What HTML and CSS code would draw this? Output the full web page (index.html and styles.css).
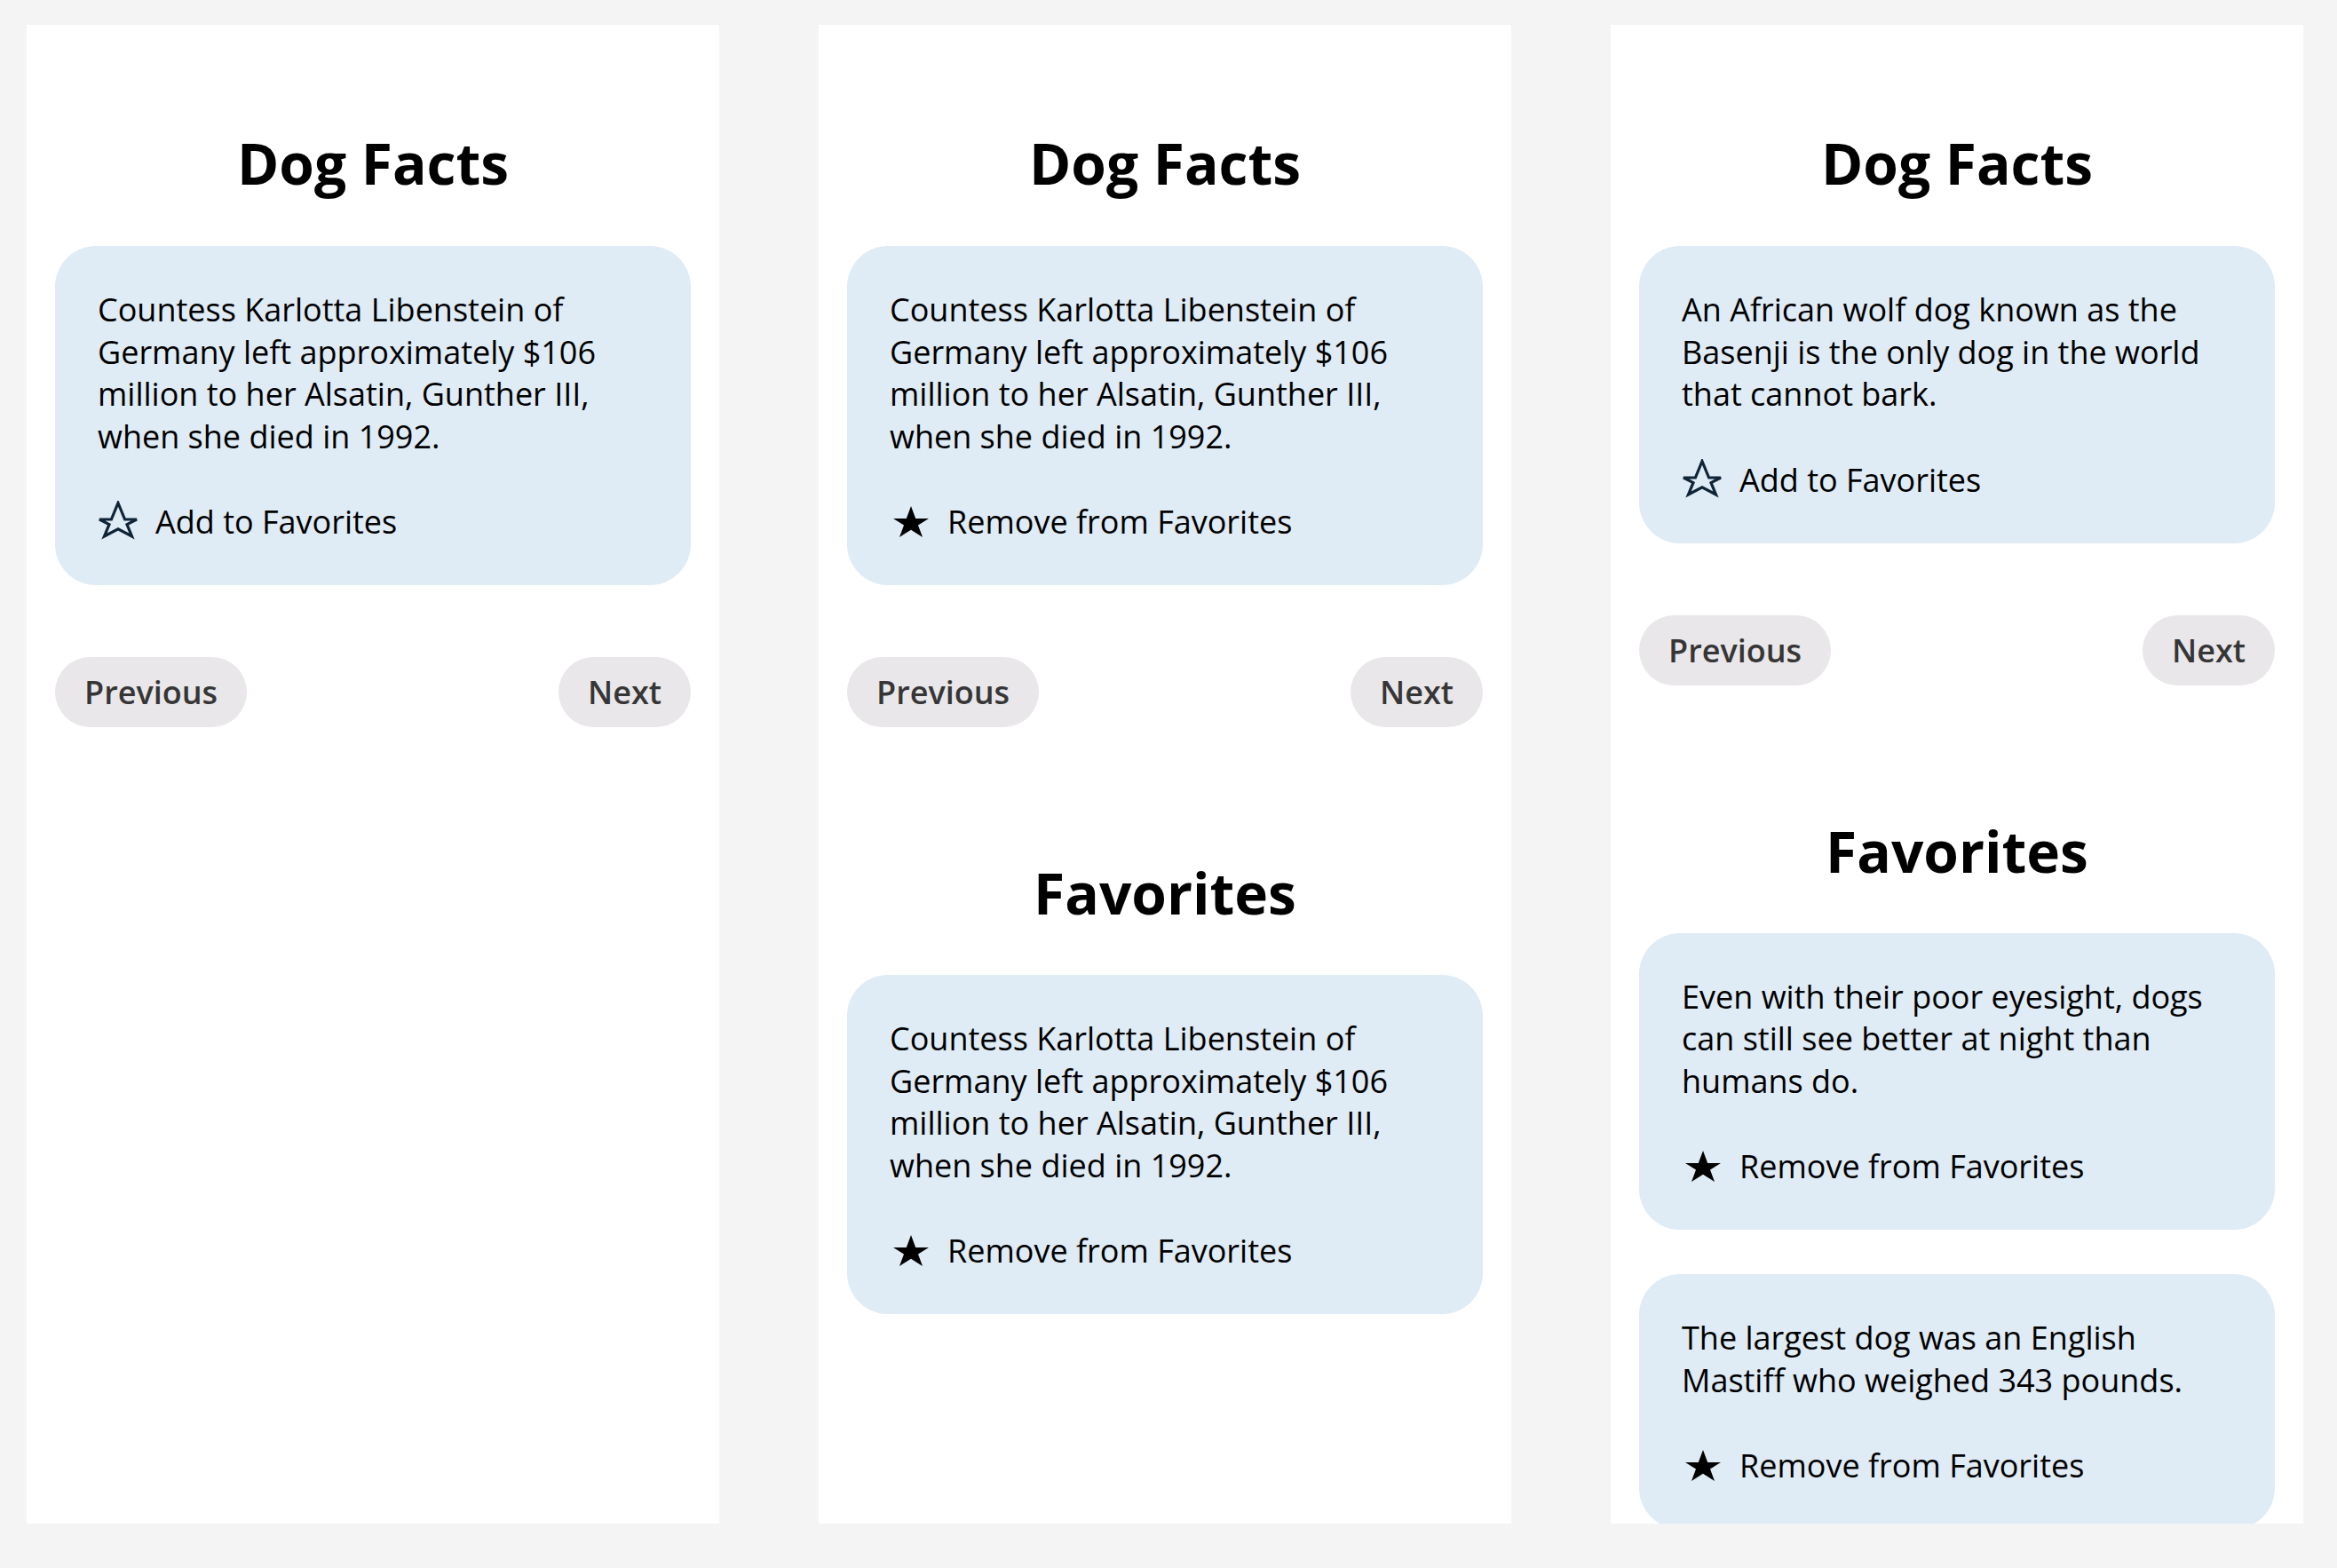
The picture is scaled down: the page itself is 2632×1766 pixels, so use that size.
FILE: index.html
```html
<!DOCTYPE html>
<html lang="en">
<head>
<meta charset="utf-8">
<title>Dog Facts</title>
<link rel="stylesheet" href="styles.css">
</head>
<body>
<svg class="defs" width="0" height="0" aria-hidden="true">
  <defs>
    <polygon id="star-outline" points="23,2.5 30.6,21 44,21 33,26.7 38.5,40 23,31.9 7.5,40 13,26.7 2,21 15.4,21"/>
    <polygon id="star-filled" points="24,6 29.2,20 44,20 32,27.6 37,41 24,32.7 11,41 16,27.6 4,20 18.8,20"/>
  </defs>
</svg>
<main class="screens">

  <section class="panel">
    <h1 class="title">Dog Facts</h1>
    <article class="card">
      <p class="fact">Countess Karlotta Libenstein of Germany left approximately $106 million to her Alsatin, Gunther III, when she died in 1992.</p>
      <button class="fav-toggle">
        <svg class="icon icon-outline" viewBox="0 0 48 48"><use href="#star-outline"/></svg>
        <span>Add to Favorites</span>
      </button>
    </article>
    <nav class="pager">
      <button class="pill">Previous</button>
      <button class="pill">Next</button>
    </nav>
  </section>

  <section class="panel">
    <h1 class="title">Dog Facts</h1>
    <article class="card">
      <p class="fact">Countess Karlotta Libenstein of Germany left approximately $106 million to her Alsatin, Gunther III, when she died in 1992.</p>
      <button class="fav-toggle">
        <svg class="icon icon-filled" viewBox="0 0 48 48"><use href="#star-filled"/></svg>
        <span>Remove from Favorites</span>
      </button>
    </article>
    <nav class="pager">
      <button class="pill">Previous</button>
      <button class="pill">Next</button>
    </nav>
    <h2 class="title title-favorites">Favorites</h2>
    <div class="fav-list">
      <article class="card">
        <p class="fact">Countess Karlotta Libenstein of Germany left approximately $106 million to her Alsatin, Gunther III, when she died in 1992.</p>
        <button class="fav-toggle">
          <svg class="icon icon-filled" viewBox="0 0 48 48"><use href="#star-filled"/></svg>
          <span>Remove from Favorites</span>
        </button>
      </article>
    </div>
  </section>

  <section class="panel">
    <h1 class="title">Dog Facts</h1>
    <article class="card">
      <p class="fact">An African wolf dog known as the Basenji is the only dog in the world that cannot bark.</p>
      <button class="fav-toggle">
        <svg class="icon icon-outline" viewBox="0 0 48 48"><use href="#star-outline"/></svg>
        <span>Add to Favorites</span>
      </button>
    </article>
    <nav class="pager">
      <button class="pill">Previous</button>
      <button class="pill">Next</button>
    </nav>
    <h2 class="title title-favorites">Favorites</h2>
    <div class="fav-list">
      <article class="card">
        <p class="fact">Even with their poor eyesight, dogs can still see better at night than humans do.</p>
        <button class="fav-toggle">
          <svg class="icon icon-filled" viewBox="0 0 48 48"><use href="#star-filled"/></svg>
          <span>Remove from Favorites</span>
        </button>
      </article>
      <article class="card">
        <p class="fact">The largest dog was an English Mastiff who weighed 343 pounds.</p>
        <button class="fav-toggle">
          <svg class="icon icon-filled" viewBox="0 0 48 48"><use href="#star-filled"/></svg>
          <span>Remove from Favorites</span>
        </button>
      </article>
    </div>
  </section>

</main>
</body>
</html>
```
FILE: styles.css
```css
* { box-sizing: border-box; }

html, body {
  margin: 0;
  padding: 0;
  background: #f4f4f4;
  overflow: hidden;
}

body {
  font-family: "Open Sans", "Noto Sans", sans-serif;
  color: #000;
}

.defs {
  position: absolute;
  width: 0;
  height: 0;
  overflow: hidden;
}

.screens {
  display: grid;
  grid-template-columns: repeat(3, 780px);
  column-gap: 112px;
  padding: 28px 0 0 30px;
  height: 1766px;
}

.panel {
  background: #fff;
  height: 1688px;
  padding: 32px;
  overflow: hidden;
}

.title {
  margin: 80px 0 50px;
  font-size: 64px;
  font-weight: 700;
  line-height: normal;
  text-align: center;
}

.title-favorites {
  margin-top: 143px;
  margin-bottom: 49px;
}

.card {
  background: #dfebf5;
  border-radius: 46px;
  padding: 48px;
}

.fact {
  margin: 0 0 48px;
  font-size: 36px;
  line-height: 47.5px;
}

.fav-toggle {
  display: flex;
  align-items: center;
  gap: 17px;
  padding: 1px 0 0;
  margin-bottom: -1px;
  border: 0;
  background: none;
  font-family: inherit;
  font-size: 36px;
  line-height: 47.5px;
  color: #000;
}

.icon {
  width: 48px;
  height: 48px;
  flex: none;
}

.icon-outline {
  fill: none;
  stroke: #0f2437;
  stroke-width: 3.2;
  stroke-linejoin: miter;
}

.icon-filled {
  fill: #000;
}

.pager {
  display: flex;
  justify-content: space-between;
  margin-top: 81px;
}

.pill {
  border: 0;
  border-radius: 40px;
  background: #e9e7e9;
  padding: 16px 33px;
  font-family: inherit;
  font-size: 36px;
  font-weight: 600;
  line-height: 47px;
  color: #363636;
}

.fav-list {
  display: flex;
  flex-direction: column;
  gap: 50px;
}
```
